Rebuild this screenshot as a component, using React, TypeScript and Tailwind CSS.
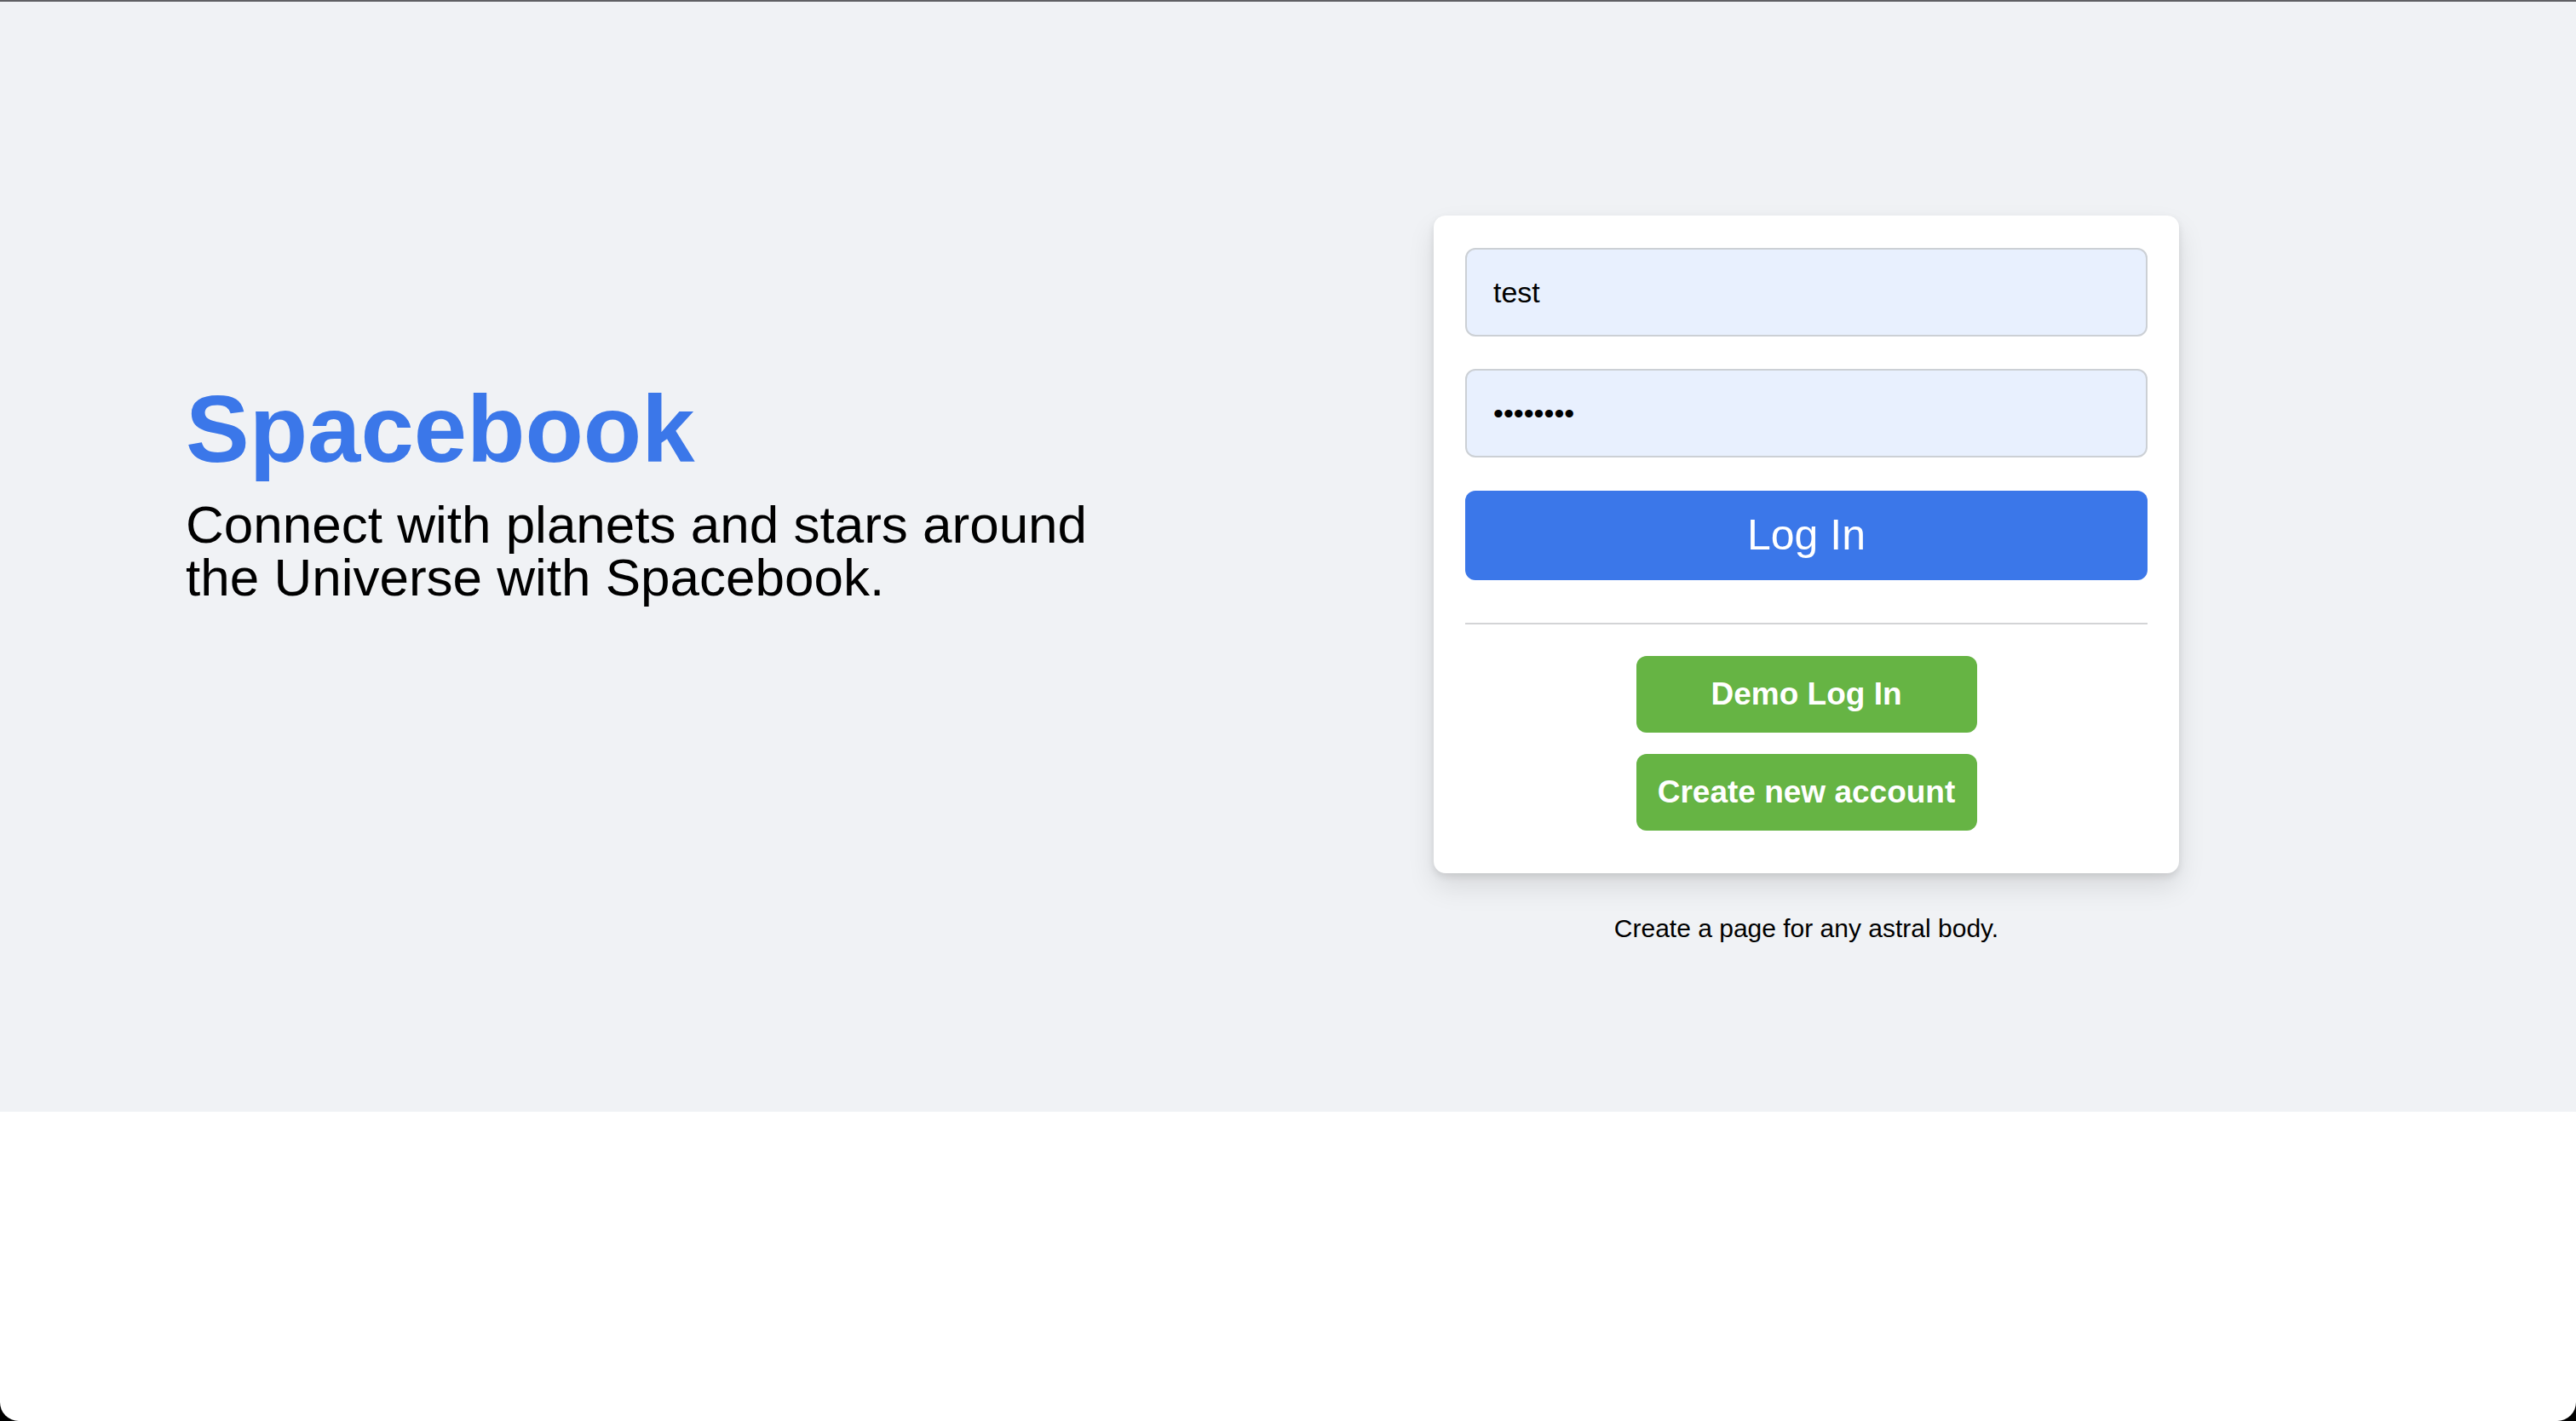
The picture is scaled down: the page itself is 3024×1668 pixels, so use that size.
import React from "react";

const font = "font-['Liberation_Sans',Arial,Helvetica,sans-serif]";

function LoginCard() {
  return (
    <div className="flex w-[875px] flex-col items-center">
      <form
        className="flex w-full flex-col rounded-[14px] bg-white px-[37px] pb-[50px] pt-[38px] shadow-[0_4px_8px_rgba(0,0,0,0.1),0_16px_32px_rgba(0,0,0,0.1)]"
        onSubmit={(e) => e.preventDefault()}
      >
        <input
          type="text"
          defaultValue="test"
          className="h-[104px] w-full rounded-[12px] border-2 border-[#ccd0d5] bg-[#e8f0fe] pl-[31px] text-[34px] text-black outline-none"
        />
        <input
          type="password"
          defaultValue="password"
          className="mt-[38px] h-[104px] w-full rounded-[12px] border-2 border-[#ccd0d5] bg-[#e8f0fe] pl-[31px] text-[34px] text-black outline-none"
        />
        <button
          type="submit"
          className="mt-[39px] h-[105px] w-full rounded-[12px] bg-[#3b77e9] text-[50px] text-white"
        >
          Log In
        </button>
        <div className="mt-[50px] h-[2px] w-full bg-[#d3d4d6]" />
        <div className="mt-[37px] flex flex-col items-center gap-[25px]">
          <button
            type="button"
            className="h-[90px] w-[400px] rounded-[12px] bg-[#66b444] text-[37px] font-bold text-white"
          >
            Demo Log In
          </button>
          <button
            type="button"
            className="h-[90px] w-[400px] rounded-[12px] bg-[#66b444] text-[37px] font-bold text-white"
          >
            Create new account
          </button>
        </div>
      </form>
      <p className="mt-[48px] text-[30px] leading-[34px] text-black">
        Create a page for any astral body.
      </p>
    </div>
  );
}

export default function App() {
  return (
    <div className={`h-[1668px] w-full bg-black ${font}`}>
      <div className="flex h-full w-full flex-col overflow-hidden rounded-b-[22px] bg-white">
        <div className="h-[2px] w-full bg-[#606064]" />
        <main className="flex h-[1303px] w-full items-start gap-[365px] bg-[#f0f2f5] pl-[218px] pt-[251px]">
          <section className="mt-[184px] w-[1100px]">
            <h1 className="text-[112px] font-bold leading-[1.2] text-[#3b77e9]">
              Spacebook
            </h1>
            <h2 className="mt-[14px] text-[62px] leading-[62px] text-black">
              Connect with planets and stars around the Universe with Spacebook.
            </h2>
          </section>
          <LoginCard />
        </main>
      </div>
    </div>
  );
}
